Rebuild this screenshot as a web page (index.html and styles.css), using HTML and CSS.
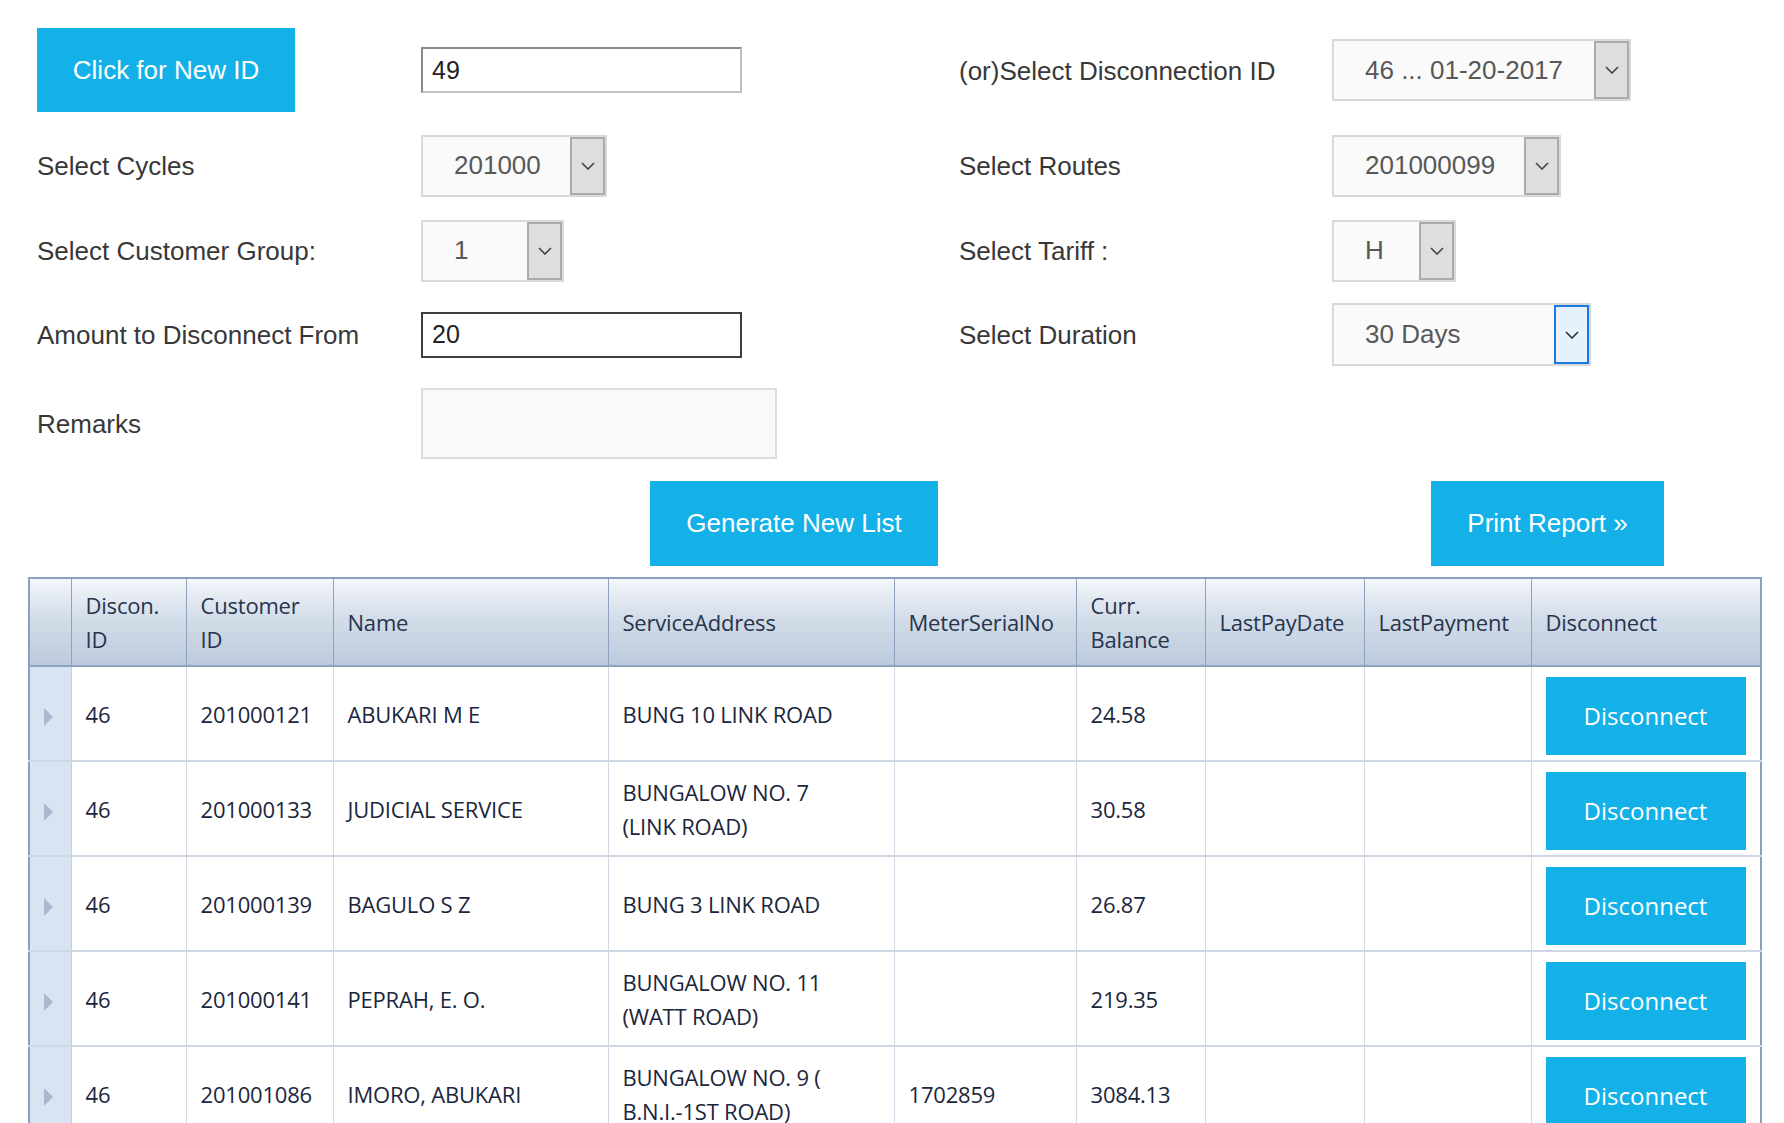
FILE: index.html
```html
<!DOCTYPE html>
<html lang="en">
<head>
<meta charset="utf-8">
<title>Disconnection List</title>
<link rel="stylesheet" href="styles.css">
</head>
<body>
<div class="page">
  <div class="form">
    <div class="cell"><button class="btn btn-newid">Click for New ID</button></div>
    <div class="cell"><div class="input inset">49</div></div>
    <div class="cell label">(or)Select Disconnection ID</div>
    <div class="cell">
      <div class="select w-disc"><span class="val">46 ... 01-20-2017</span><span class="arrow"><svg width="14" height="8" viewBox="0 0 14 8"><path d="M1 1 L7 7 L13 1" fill="none" stroke="#444" stroke-width="1.6"/></svg></span></div>
    </div>

    <div class="cell label">Select Cycles</div>
    <div class="cell">
      <div class="select w-cyc"><span class="val">201000</span><span class="arrow"><svg width="14" height="8" viewBox="0 0 14 8"><path d="M1 1 L7 7 L13 1" fill="none" stroke="#444" stroke-width="1.6"/></svg></span></div>
    </div>
    <div class="cell label">Select Routes</div>
    <div class="cell">
      <div class="select w-route"><span class="val">201000099</span><span class="arrow"><svg width="14" height="8" viewBox="0 0 14 8"><path d="M1 1 L7 7 L13 1" fill="none" stroke="#444" stroke-width="1.6"/></svg></span></div>
    </div>

    <div class="cell label">Select Customer Group:</div>
    <div class="cell">
      <div class="select w-grp"><span class="val">1</span><span class="arrow"><svg width="14" height="8" viewBox="0 0 14 8"><path d="M1 1 L7 7 L13 1" fill="none" stroke="#444" stroke-width="1.6"/></svg></span></div>
    </div>
    <div class="cell label">Select Tariff :</div>
    <div class="cell">
      <div class="select w-tariff"><span class="val">H</span><span class="arrow"><svg width="14" height="8" viewBox="0 0 14 8"><path d="M1 1 L7 7 L13 1" fill="none" stroke="#444" stroke-width="1.6"/></svg></span></div>
    </div>

    <div class="cell label">Amount to Disconnect From</div>
    <div class="cell"><div class="input focused">20</div></div>
    <div class="cell label">Select Duration</div>
    <div class="cell">
      <div class="select w-dur"><span class="val">30 Days</span><span class="arrow arrow-focus"><svg width="14" height="8" viewBox="0 0 14 8"><path d="M1 1 L7 7 L13 1" fill="none" stroke="#333" stroke-width="1.6"/></svg></span></div>
    </div>

    <div class="cell label">Remarks</div>
    <div class="cell"><div class="textarea"></div></div>
    <div class="cell"></div>
    <div class="cell"></div>
  </div>

  <div class="actions">
    <button class="btn btn-generate">Generate New List</button>
    <button class="btn btn-print">Print Report &raquo;</button>
  </div>

  <table class="grid">
    <colgroup>
      <col class="c-ind"><col class="c-did"><col class="c-cid"><col class="c-name"><col class="c-addr"><col class="c-meter"><col class="c-bal"><col class="c-lpd"><col class="c-lp"><col class="c-disc">
    </colgroup>
    <thead>
      <tr>
        <th class="ind"></th>
        <th>Discon.<br>ID</th>
        <th>Customer<br>ID</th>
        <th>Name</th>
        <th>ServiceAddress</th>
        <th>MeterSerialNo</th>
        <th>Curr.<br>Balance</th>
        <th>LastPayDate</th>
        <th>LastPayment</th>
        <th>Disconnect</th>
      </tr>
    </thead>
    <tbody>
      <tr>
        <td class="ind"><span class="tri"></span></td>
        <td>46</td><td>201000121</td><td>ABUKARI M E</td><td>BUNG 10 LINK ROAD</td><td></td><td>24.58</td><td></td><td></td>
        <td class="act"><button class="btn btn-disc">Disconnect</button></td>
      </tr>
      <tr>
        <td class="ind"><span class="tri"></span></td>
        <td>46</td><td>201000133</td><td>JUDICIAL SERVICE</td><td>BUNGALOW NO. 7<br>(LINK ROAD)</td><td></td><td>30.58</td><td></td><td></td>
        <td class="act"><button class="btn btn-disc">Disconnect</button></td>
      </tr>
      <tr>
        <td class="ind"><span class="tri"></span></td>
        <td>46</td><td>201000139</td><td>BAGULO S Z</td><td>BUNG 3 LINK ROAD</td><td></td><td>26.87</td><td></td><td></td>
        <td class="act"><button class="btn btn-disc">Disconnect</button></td>
      </tr>
      <tr>
        <td class="ind"><span class="tri"></span></td>
        <td>46</td><td>201000141</td><td>PEPRAH, E. O.</td><td>BUNGALOW NO. 11<br>(WATT ROAD)</td><td></td><td>219.35</td><td></td><td></td>
        <td class="act"><button class="btn btn-disc">Disconnect</button></td>
      </tr>
      <tr>
        <td class="ind"><span class="tri"></span></td>
        <td>46</td><td>201001086</td><td>IMORO, ABUKARI</td><td>BUNGALOW NO. 9 (<br>B.N.I.-1ST ROAD)</td><td>1702859</td><td>3084.13</td><td></td><td></td>
        <td class="act"><button class="btn btn-disc">Disconnect</button></td>
      </tr>
    </tbody>
  </table>
</div>
</body>
</html>
```
FILE: styles.css
```css
html, body {
  margin: 0;
  padding: 0;
  background: #ffffff;
  overflow: hidden;
}

.page {
  padding: 28px 0 0 28px;
  font-family: "Liberation Sans", Arial, sans-serif;
  font-size: 26px;
  color: #333;
}

.form {
  margin-left: 9px;
  display: grid;
  grid-template-columns: 384px 538px 373px 1fr;
  grid-template-rows: 84px 107px 63px 105px 73px;
}

.cell {
  display: flex;
  align-items: center;
}

.label {
  color: #383838;
  padding-top: 2px;
}

.btn {
  background: #13b1e8;
  color: #ffffff;
  border: none;
  font-family: "Liberation Sans", Arial, sans-serif;
  font-size: 26px;
  padding: 0;
  margin: 0;
  cursor: pointer;
}

.btn-newid {
  width: 258px;
  height: 84px;
}

.input {
  box-sizing: border-box;
  width: 321px;
  height: 46px;
  border: 2px solid #3d3d3d;
  padding-left: 9px;
  display: flex;
  align-items: center;
  color: #222;
  font-size: 25px;
  background: #fff;
}

.input.inset {
  border-color: #8a8a8a #c0c0c0 #c0c0c0 #8a8a8a;
}

.textarea {
  box-sizing: border-box;
  width: 356px;
  height: 71px;
  border: 2px solid #dcdcdc;
  background: #f9f9f9;
}

.select {
  box-sizing: border-box;
  height: 62px;
  border: 2px solid #d9d9d9;
  background: #fafafa;
  display: flex;
}

.select .val {
  flex: 1;
  padding-left: 31px;
  display: flex;
  align-items: center;
  color: #585858;
  white-space: nowrap;
}

.select .arrow {
  box-sizing: border-box;
  width: 35px;
  border: 2px solid #ababab;
  background: #dedede;
  display: flex;
  align-items: center;
  justify-content: center;
}

.select .arrow-focus {
  border-color: #1a7ae0;
  background: #e5f1fb;
}

.w-disc { width: 299px; }
.w-cyc { width: 186px; }
.w-route { width: 229px; }
.w-grp { width: 143px; }
.w-tariff { width: 124px; }
.w-dur { width: 259px; height: 63px; }

.actions {
  display: flex;
  margin-top: 21px;
  height: 85px;
}

.btn-generate {
  margin-left: 622px;
  width: 288px;
  height: 85px;
}

.btn-print {
  margin-left: 493px;
  width: 233px;
  height: 85px;
}

.grid {
  margin-top: 11px;
  width: 1732px;
  table-layout: fixed;
  border-collapse: collapse;
  border: 2px solid #8c9fbd;
  font-family: "Open Sans", "Noto Sans", sans-serif;
  font-size: 22px;
  line-height: 34px;
  letter-spacing: -0.2px;
}

.c-ind { width: 42px; }
.c-did { width: 115px; }
.c-cid { width: 147px; }
.c-name { width: 275px; }
.c-addr { width: 286px; }
.c-meter { width: 182px; }
.c-bal { width: 129px; }
.c-lpd { width: 159px; }
.c-lp { width: 167px; }
.c-disc { width: 230px; }

.grid th {
  height: 86px;
  padding: 0 8px 0 14px;
  text-align: left;
  font-weight: normal;
  color: #27344d;
  background: linear-gradient(to bottom, #f4f6fa 0%, #d3dde9 45%, #bccadc 100%);
  border: 1px solid #8ea1bf;
  border-bottom: 2px solid #8ea1bf;
  vertical-align: middle;
}

.grid td {
  height: 89px;
  padding: 0 8px 0 14px;
  color: #1b263c;
  border-left: 1px solid #d2d9e6;
  border-right: 1px solid #d2d9e6;
  border-bottom: 2px solid #cfd7e5;
  vertical-align: middle;
  white-space: nowrap;
}

.grid td.ind {
  background: #d9e4f3;
  padding: 0;
  text-align: center;
  border-right: 1px solid #c3cfe0;
}

.grid th.ind {
  padding: 0;
}

.tri {
  display: inline-block;
  width: 0;
  height: 0;
  border-top: 9px solid transparent;
  border-bottom: 9px solid transparent;
  border-left: 9px solid #a9b8cf;
  margin-left: -4px;
  vertical-align: middle;
}

.grid td.act {
  padding: 4px 0 0 14px;
}

.btn-disc {
  display: block;
  width: 200px;
  height: 78px;
  font-family: "Open Sans", "Noto Sans", sans-serif;
  font-size: 24px;
  letter-spacing: 0;
}
```
